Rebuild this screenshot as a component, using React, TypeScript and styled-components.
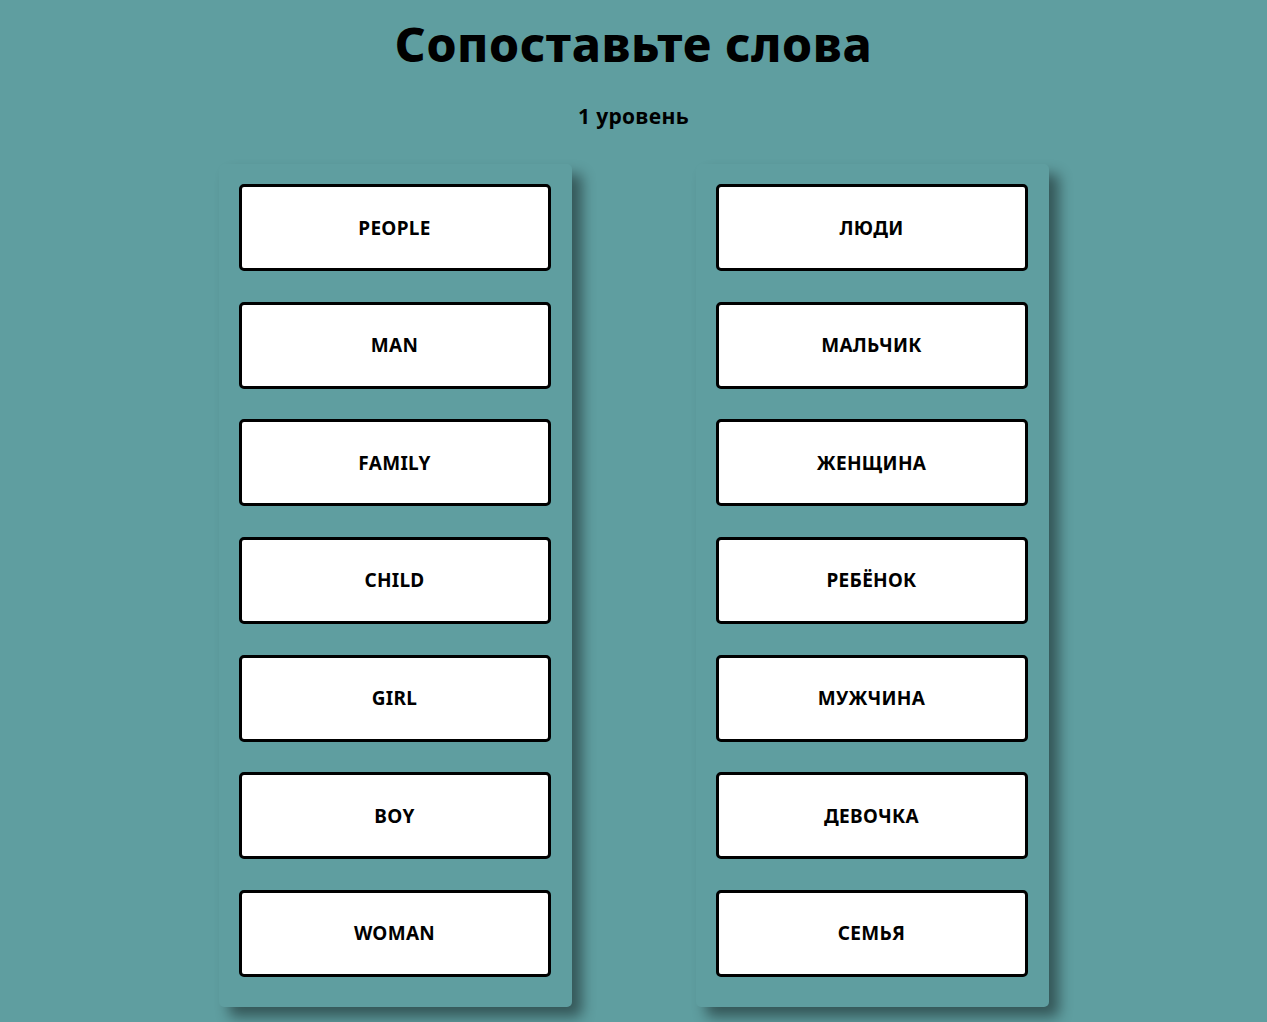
import React from "react";
import styled, { createGlobalStyle } from "styled-components";

const GlobalStyle = createGlobalStyle`
  html, body {
    margin: 0;
    padding: 0;
    background: #5f9ea0;
  }
  body {
    font-family: "Comic Sans MS", "Noto Sans", sans-serif;
    color: #000;
  }
`;

const Page = styled.main`
  min-height: 1022px;
  display: flex;
  flex-direction: column;
  align-items: center;
  padding-top: 13px;
  box-sizing: border-box;
`;

const Title = styled.h1`
  margin: 0;
  font-family: "Comic Sans MS", "Noto Sans", sans-serif;
  font-weight: 800;
  font-size: 48px;
  line-height: 62px;
  letter-spacing: 0.6px;
`;

const Level = styled.div`
  margin-top: 29px;
  font-family: "Open Sans", "Noto Sans", sans-serif;
  font-weight: 700;
  font-size: 21px;
  line-height: 24px;
  letter-spacing: 0.3px;
`;

const Board = styled.div`
  margin-top: 36px;
  display: flex;
  gap: 124px;
`;

const Column = styled.div`
  width: 353px;
  box-sizing: border-box;
  padding: 20px 21px 30px 20px;
  border-radius: 5px;
  background: #5f9ea0;
  box-shadow: 10px 10px 14px rgba(0, 0, 0, 0.45);
  display: flex;
  flex-direction: column;
  gap: 30.67px;
`;

const Card = styled.button`
  height: 87px;
  width: 100%;
  box-sizing: border-box;
  background: #fff;
  border: 3px solid #000;
  border-radius: 5px;
  display: flex;
  align-items: center;
  justify-content: center;
  font-family: "Comic Sans MS", "Noto Sans", sans-serif;
  font-weight: 700;
  font-size: 19px;
  letter-spacing: 0.3px;
  color: #000;
  text-transform: uppercase;
  cursor: pointer;
  padding: 0;
`;

const left = ["people", "man", "family", "child", "girl", "boy", "woman"];
const right = ["люди", "мальчик", "женщина", "ребёнок", "мужчина", "девочка", "семья"];

export default function App() {
  return (
    <>
      <GlobalStyle />
      <Page>
        <Title>Сопоставьте слова</Title>
        <Level>1 уровень</Level>
        <Board>
          <Column>
            {left.map((w) => (
              <Card key={w}>{w}</Card>
            ))}
          </Column>
          <Column>
            {right.map((w) => (
              <Card key={w}>{w}</Card>
            ))}
          </Column>
        </Board>
      </Page>
    </>
  );
}
